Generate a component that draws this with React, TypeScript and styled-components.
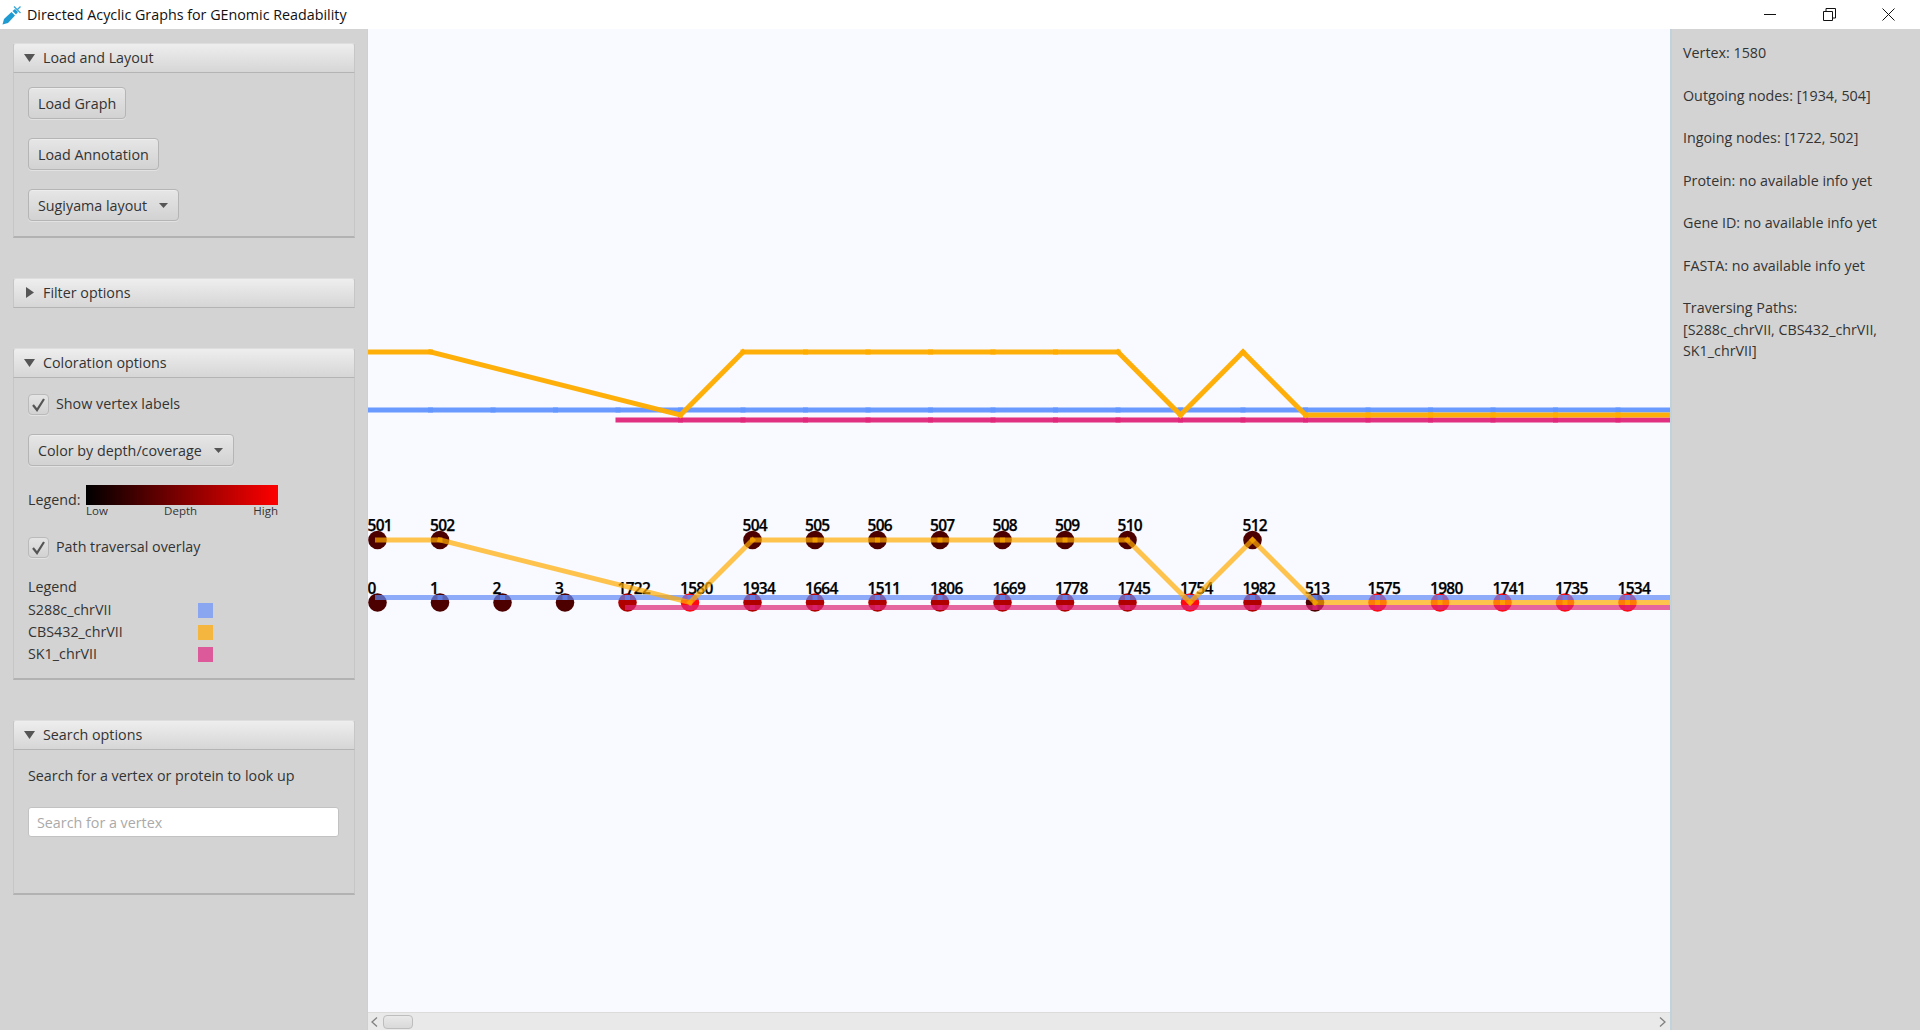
import { ReactElement } from "react";
import styled, { createGlobalStyle } from "styled-components";

const FONT = `"Open Sans", "Noto Sans", sans-serif`;

const STEP = 62.5;
const NODE_X0 = 377.5;
const ROW_TOP = 540;
const ROW_BOTTOM = 602.5;

const DARK = "#4d0000";
const MID = "#b00000";
const HOT = "#ff0a14";

type GraphNode = { label: string; slot: number; row: number; fill: string };

const bottomRow: [string, string][] = [
  ["0", DARK],
  ["1", DARK],
  ["2", DARK],
  ["3", DARK],
  ["1722", MID],
  ["1580", HOT],
  ["1934", MID],
  ["1664", MID],
  ["1511", MID],
  ["1806", MID],
  ["1669", MID],
  ["1778", MID],
  ["1745", MID],
  ["1754", HOT],
  ["1982", MID],
  ["513", DARK],
  ["1575", HOT],
  ["1980", HOT],
  ["1741", HOT],
  ["1735", HOT],
  ["1534", HOT],
];

const topRow: [string, number][] = [
  ["501", 0],
  ["502", 1],
  ["504", 6],
  ["505", 7],
  ["506", 8],
  ["507", 9],
  ["508", 10],
  ["509", 11],
  ["510", 12],
  ["512", 14],
];

const nodes: GraphNode[] = [
  ...bottomRow.map(([label, fill], slot) => ({ label, slot, row: ROW_BOTTOM, fill })),
  ...topRow.map(([label, slot]) => ({ label, slot, row: ROW_TOP, fill: DARK })),
];

const spaced = (from: number, to: number, y: number): number[][] => {
  const points: number[][] = [];
  for (let x = from; x < to; x += STEP) points.push([x, y]);
  points.push([to, y]);
  return points;
};

// bare graph on top
const plainPaths = [
  { color: "#6496ff", points: spaced(368, 1680, 410) },
  { color: "#e0267c", points: spaced(618, 1680, 420) },
  {
    color: "#ffac00",
    points: [
      [368, 352],
      [430.5, 352],
      [680.5, 415],
      [743, 352],
      [805.5, 352],
      [868, 352],
      [930.5, 352],
      [993, 352],
      [1055.5, 352],
      [1118, 352],
      [1180.5, 415],
      [1243, 352],
      [1305.5, 415],
      ...spaced(1368, 1680, 415),
    ],
  },
];

// same paths laid over the vertices
const overlayPaths = [
  { color: "#6189f6", points: spaced(377.5, 1680, 597.5) },
  { color: "#dd2576", points: spaced(627.5, 1680, 607.5) },
  {
    color: "#ffab00",
    points: [
      [377.5, 540],
      [440, 540],
      [690, 602.5],
      [752.5, 540],
      [815, 540],
      [877.5, 540],
      [940, 540],
      [1002.5, 540],
      [1065, 540],
      [1127.5, 540],
      [1190, 602.5],
      [1252.5, 540],
      [1315, 602.5],
      ...spaced(1377.5, 1680, 602.5),
    ],
  },
];

const GlobalStyle = createGlobalStyle`
  html, body {
    margin: 0;
    padding: 0;
    height: 100%;
    overflow: hidden;
    background: #d3d3d3;
  }
  #root {
    height: 100%;
  }
`;

const Window = styled.div`
  display: flex;
  flex-direction: column;
  width: 1920px;
  height: 1030px;
  font-family: ${FONT};
  font-size: 14.3px;
  color: #333;
`;

const TitleBar = styled.header`
  display: flex;
  align-items: center;
  height: 29px;
  flex: none;
  background: #fff;
  padding-left: 2px;
  color: #111;
`;

const AppIcon = styled.svg`
  width: 20px;
  height: 20px;
  margin-right: 5px;
`;

const WindowButtons = styled.div`
  display: flex;
  align-items: center;
  margin-left: auto;
  padding-right: 25px;
  gap: 46px;

  svg {
    display: block;
  }
`;

const Main = styled.div`
  display: flex;
  flex: 1;
  min-height: 0;
`;

const Sidebar = styled.aside`
  display: flex;
  flex-direction: column;
  gap: 40px;
  width: 367px;
  flex: none;
  box-sizing: border-box;
  padding: 14px 12px 0 13px;
  background: #d3d3d3;
`;

const Pane = styled.section`
  display: flex;
  flex-direction: column;
`;

const PaneHeader = styled.div`
  display: flex;
  align-items: center;
  gap: 8px;
  height: 30px;
  box-sizing: border-box;
  padding: 0 0 1px 10px;
  border: 1px solid #c6c6c6;
  border-bottom-color: #b4b4b4;
  border-top-color: #dedede;
  border-radius: 3px 3px 0 0;
  background: linear-gradient(#eeeeee, #d6d6d6);
`;

const PaneBody = styled.div<{ $height: number }>`
  display: flex;
  flex-direction: column;
  align-items: flex-start;
  height: ${(props) => props.$height}px;
  box-sizing: border-box;
  padding: 14px 14px 0 14px;
  border-left: 1px solid #c6c6c6;
  border-right: 1px solid #c6c6c6;
  border-bottom: 2px solid #b2b2b2;
`;

const Caret = styled.svg`
  width: 11px;
  height: 11px;
  flex: none;
  fill: #555;
`;

const PushButton = styled.button`
  display: inline-flex;
  align-items: center;
  height: 32px;
  box-sizing: border-box;
  padding: 0 9px;
  border: 1px solid #b5b5b5;
  border-radius: 4px;
  background: linear-gradient(#e6e6e6, #d2d2d2);
  box-shadow: inset 0 1px 0 #ededed, 0 1px 0 #e2e2e2;
  font: inherit;
  color: inherit;
  white-space: nowrap;
`;

const ComboButton = styled(PushButton)`
  gap: 12px;
  padding-right: 10px;
`;

const ComboArrow = styled.svg`
  width: 9px;
  height: 5px;
  fill: #555;
`;

const StackedControls = styled.div`
  display: flex;
  flex-direction: column;
  align-items: flex-start;
  gap: 19px;
`;

const CheckRow = styled.label<{ $top: number }>`
  display: flex;
  align-items: center;
  gap: 7px;
  margin-top: ${(props) => props.$top}px;
  height: 21px;
`;

const CheckText = styled.span`
  margin-top: -2px;
`;

const CheckBox = styled.span`
  display: flex;
  align-items: center;
  justify-content: center;
  width: 21px;
  height: 21px;
  box-sizing: border-box;
  border: 1px solid #bababa;
  border-radius: 4px;
  background: linear-gradient(#e4e4e4, #d2d2d2);
  box-shadow: 0 1px 0 #e2e2e2;
`;

const SpacedCombo = styled.div`
  margin-top: 19px;
`;

const DepthLegend = styled.div`
  display: flex;
  margin-top: 19px;
  height: 34px;
`;

const DepthCaption = styled.span`
  width: 58px;
  padding-top: 5px;
`;

const DepthScale = styled.div`
  width: 192px;
  display: flex;
  flex-direction: column;
`;

const DepthBar = styled.div`
  height: 20px;
  flex: none;
  background: linear-gradient(90deg, #000, #ff0000);
`;

const DepthTicks = styled.div`
  display: flex;
  justify-content: space-between;
  font-size: 11.5px;
  line-height: 12px;
`;

const PathLegend = styled.div`
  display: flex;
  flex-direction: column;
  margin-top: 19px;
  width: 100%;
`;

const LegendTitle = styled.div`
  height: 22px;
  line-height: 20px;
`;

const LegendRow = styled.div`
  display: flex;
  align-items: center;
  justify-content: space-between;
  width: 185px;
  height: 22px;
  line-height: 20px;
`;

const Swatch = styled.span<{ $color: string }>`
  width: 15px;
  height: 15px;
  background: ${(props) => props.$color};
`;

const SearchHint = styled.div`
  margin-top: 2px;
  line-height: 20px;
`;

const SearchField = styled.input`
  width: 311px;
  height: 30px;
  margin-top: 21px;
  box-sizing: border-box;
  padding: 0 8px;
  border: 1px solid #c2c2c2;
  border-radius: 3px;
  background: #fff;
  font: inherit;
  outline: none;

  &::placeholder {
    color: #aaa;
    opacity: 1;
  }
`;

const CanvasColumn = styled.main`
  display: flex;
  flex-direction: column;
  width: 1305px;
  flex: none;
  box-sizing: border-box;
  border-left: 1px solid #b9d6e2;
  border-right: 2px solid #c2d2da;
  background: #f8faff;
`;

const GraphArea = styled.svg`
  display: block;
  flex: 1;
  width: 100%;
  min-height: 0;
`;

const VertexLabel = styled.text`
  font-family: ${FONT};
  font-size: 15.5px;
  font-weight: 600;
  letter-spacing: -0.7px;
  fill: #000;
  stroke: #000;
  stroke-width: 0.25px;
`;

const ScrollBar = styled.div`
  display: flex;
  align-items: center;
  justify-content: space-between;
  height: 18px;
  flex: none;
  box-sizing: border-box;
  padding: 0 4px 0 3px;
  border-top: 1px solid #dcdcdc;
  background: #e9e9e9;
`;

const ScrollArrow = styled.svg`
  width: 7px;
  height: 10px;
  fill: none;
  stroke: #808080;
  stroke-width: 1.3;
`;

const ScrollThumb = styled.div`
  width: 30px;
  height: 14px;
  margin: 0 auto 0 5px;
  box-sizing: border-box;
  border: 1px solid #bdbdbd;
  border-radius: 4px;
  background: linear-gradient(#e9e9e9, #d9d9d9);
`;

const InfoPanel = styled.aside`
  display: flex;
  flex-direction: column;
  gap: 21px;
  width: 248px;
  flex: none;
  box-sizing: border-box;
  padding: 13px 8px 0 11px;
  background: #d3d3d3;
  line-height: 21.5px;
`;

const InfoLine = styled.div`
  white-space: pre-line;
`;

const DownCaret = () => (
  <Caret viewBox="0 0 11 11">
    <polygon points="0,2 11,2 5.5,10" />
  </Caret>
);

const RightCaret = () => (
  <Caret viewBox="0 0 11 11">
    <polygon points="2,0 10,5.5 2,11" />
  </Caret>
);

const CheckMark = () => (
  <svg width="15" height="15" viewBox="0 0 15 15">
    <path d="M2 8 L6 13 L13 2" fill="none" stroke="#555" strokeWidth="2.2" />
  </svg>
);

const Arrow = () => (
  <ComboArrow viewBox="0 0 9 5">
    <polygon points="0,0 9,0 4.5,5" />
  </ComboArrow>
);

function EdgePath({ color, points, opacity }: { color: string; points: number[][]; opacity: number }) {
  return (
    <g stroke={color} strokeWidth={5} strokeLinecap="square" strokeOpacity={opacity}>
      {points.slice(1).map((point, i) => (
        <line key={i} x1={points[i][0] - 368} y1={points[i][1] - 29} x2={point[0] - 368} y2={point[1] - 29} />
      ))}
    </g>
  );
}

export default function App(): ReactElement {
  return (
    <Window>
      <GlobalStyle />
      <TitleBar>
        <AppIcon viewBox="0 0 20 20">
          <path d="M0.5 19.5 L2 14 L9.5 7 L13 10.5 L6 18 Z" fill="#1f9bd1" />
          <path d="M10.5 6 L14 9.5 L16 7 L13 4 Z" fill="#1f9bd1" />
          <path d="M12 1.5 L18.5 8 M15.5 4.5 L18.5 1.5" stroke="#3fa9d6" strokeWidth="1.4" fill="none" />
        </AppIcon>
        Directed Acyclic Graphs for GEnomic Readability
        <WindowButtons>
          <svg width="13" height="13" viewBox="0 0 13 13">
            <path d="M0 6.5 H12" stroke="#111" strokeWidth="1" />
          </svg>
          <svg width="13" height="13" viewBox="0 0 13 13">
            <path d="M0.5 3.5 H9.5 V12.5 H0.5 Z M3 3 V0.5 H12.5 V10 H10" fill="none" stroke="#111" strokeWidth="1" />
          </svg>
          <svg width="13" height="13" viewBox="0 0 13 13">
            <path d="M0.5 0.5 L12.5 12.5 M12.5 0.5 L0.5 12.5" stroke="#111" strokeWidth="1" />
          </svg>
        </WindowButtons>
      </TitleBar>
      <Main>
        <Sidebar>
          <Pane>
            <PaneHeader>
              <DownCaret />
              Load and Layout
            </PaneHeader>
            <PaneBody $height={165}>
              <StackedControls>
                <PushButton>Load Graph</PushButton>
                <PushButton>Load Annotation</PushButton>
                <ComboButton>
                  Sugiyama layout
                  <Arrow />
                </ComboButton>
              </StackedControls>
            </PaneBody>
          </Pane>
          <Pane>
            <PaneHeader>
              <RightCaret />
              Filter options
            </PaneHeader>
          </Pane>
          <Pane>
            <PaneHeader>
              <DownCaret />
              Coloration options
            </PaneHeader>
            <PaneBody $height={302}>
              <CheckRow $top={2}>
                <CheckBox>
                  <CheckMark />
                </CheckBox>
                <CheckText>Show vertex labels</CheckText>
              </CheckRow>
              <SpacedCombo>
                <ComboButton>
                  Color by depth/coverage
                  <Arrow />
                </ComboButton>
              </SpacedCombo>
              <DepthLegend>
                <DepthCaption>Legend:</DepthCaption>
                <DepthScale>
                  <DepthBar />
                  <DepthTicks>
                    <span>Low</span>
                    <span>Depth</span>
                    <span>High</span>
                  </DepthTicks>
                </DepthScale>
              </DepthLegend>
              <CheckRow $top={18}>
                <CheckBox>
                  <CheckMark />
                </CheckBox>
                <CheckText>Path traversal overlay</CheckText>
              </CheckRow>
              <PathLegend>
                <LegendTitle>Legend</LegendTitle>
                <LegendRow>
                  S288c_chrVII
                  <Swatch $color="#8ba6f0" />
                </LegendRow>
                <LegendRow>
                  CBS432_chrVII
                  <Swatch $color="#f4b63e" />
                </LegendRow>
                <LegendRow>
                  SK1_chrVII
                  <Swatch $color="#dc5a99" />
                </LegendRow>
              </PathLegend>
            </PaneBody>
          </Pane>
          <Pane>
            <PaneHeader>
              <DownCaret />
              Search options
            </PaneHeader>
            <PaneBody $height={145}>
              <SearchHint>Search for a vertex or protein to look up</SearchHint>
              <SearchField placeholder="Search for a vertex" readOnly />
            </PaneBody>
          </Pane>
        </Sidebar>
        <CanvasColumn>
          <GraphArea>
            {plainPaths.map((path) => (
              <EdgePath key={path.color} color={path.color} points={path.points} opacity={0.96} />
            ))}
            {nodes.map((node) => (
              <circle
                key={node.label}
                cx={NODE_X0 + node.slot * STEP - 368}
                cy={node.row - 29}
                r={9.3}
                fill={node.fill}
              />
            ))}
            {nodes.map((node) => (
              <VertexLabel key={node.label} x={node.slot * STEP - 0.5} y={node.row - 29 - 9}>
                {node.label}
              </VertexLabel>
            ))}
            {overlayPaths.map((path) => (
              <EdgePath key={path.color} color={path.color} points={path.points} opacity={0.7} />
            ))}
          </GraphArea>
          <ScrollBar>
            <ScrollArrow viewBox="0 0 7 10">
              <path d="M6 0.5 L1 5 L6 9.5" />
            </ScrollArrow>
            <ScrollThumb />
            <ScrollArrow viewBox="0 0 7 10">
              <path d="M1 0.5 L6 5 L1 9.5" />
            </ScrollArrow>
          </ScrollBar>
        </CanvasColumn>
        <InfoPanel>
          <InfoLine>Vertex: 1580</InfoLine>
          <InfoLine>Outgoing nodes: [1934, 504]</InfoLine>
          <InfoLine>Ingoing nodes: [1722, 502]</InfoLine>
          <InfoLine>Protein: no available info yet</InfoLine>
          <InfoLine>Gene ID: no available info yet</InfoLine>
          <InfoLine>FASTA: no available info yet</InfoLine>
          <InfoLine>{"Traversing Paths:\n[S288c_chrVII, CBS432_chrVII,\nSK1_chrVII]"}</InfoLine>
        </InfoPanel>
      </Main>
    </Window>
  );
}
